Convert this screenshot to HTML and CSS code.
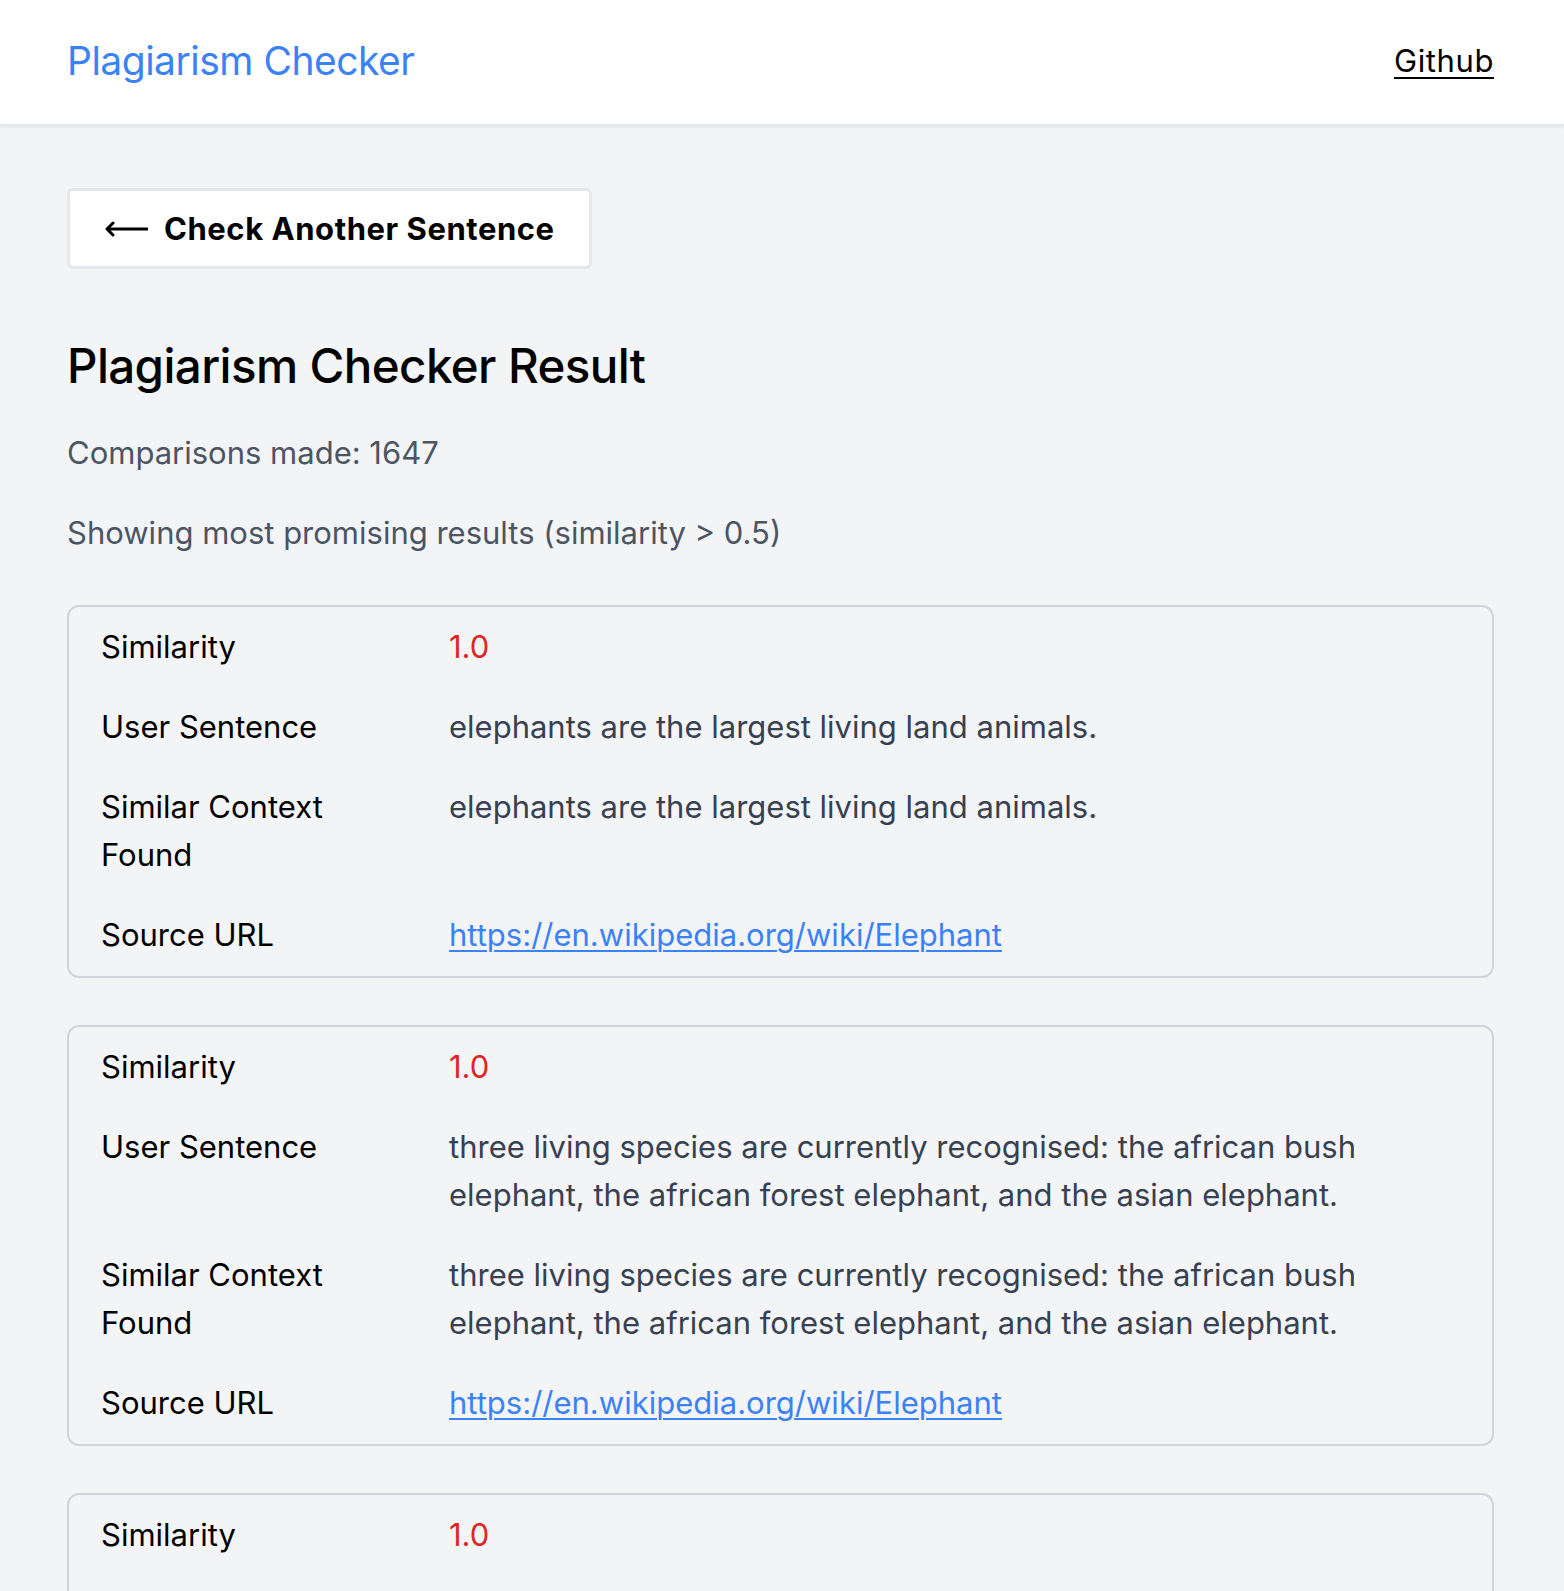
FILE: index.html
```html
<!DOCTYPE html>
<html lang="en">
<head>
<meta charset="utf-8">
<title>Plagiarism Checker</title>
<link rel="stylesheet" href="styles.css">
</head>
<body>
<header class="topbar">
  <a class="brand" href="#">Plagiarism Checker</a>
  <a class="gh" href="#">Github</a>
</header>
<main class="page">
  <a class="back" href="#"><svg class="arrow" width="44" height="18" viewBox="0 0 44 18" aria-hidden="true"><path d="M43 9H3M9 3L3 9L9 15" fill="none" stroke="#000" stroke-width="3" stroke-linecap="round" stroke-linejoin="round"/></svg><span>Check Another Sentence</span></a>
  <h1 class="title">Plagiarism Checker Result</h1>
  <p class="meta">Comparisons made: 1647</p>
  <p class="meta">Showing most promising results (similarity &gt; 0.5)</p>

  <section class="card">
    <div class="label">Similarity</div><div class="score">1.0</div>
    <div class="label">User Sentence</div><div class="value">elephants are the largest living land animals.</div>
    <div class="label">Similar Context Found</div><div class="value">elephants are the largest living land animals.</div>
    <div class="label">Source URL</div><div class="value"><a class="link" href="#">https://en.wikipedia.org/wiki/Elephant</a></div>
  </section>

  <section class="card">
    <div class="label">Similarity</div><div class="score">1.0</div>
    <div class="label">User Sentence</div><div class="value">three living species are currently recognised: the african bush elephant, the african forest elephant, and the asian elephant.</div>
    <div class="label">Similar Context Found</div><div class="value">three living species are currently recognised: the african bush elephant, the african forest elephant, and the asian elephant.</div>
    <div class="label">Source URL</div><div class="value"><a class="link" href="#">https://en.wikipedia.org/wiki/Elephant</a></div>
  </section>

  <section class="card">
    <div class="label">Similarity</div><div class="score">1.0</div>
    <div class="label">User Sentence</div><div class="value">elephants are the largest living land animals.</div>
    <div class="label">Similar Context Found</div><div class="value">elephants are the largest living land animals.</div>
    <div class="label">Source URL</div><div class="value"><a class="link" href="#">https://en.wikipedia.org/wiki/Elephant</a></div>
  </section>
</main>
</body>
</html>
```
FILE: styles.css
```css
* { box-sizing: border-box; }
html, body { margin: 0; padding: 0; }
body {
  background: #f3f4f6;
  font-family: Inter, "Noto Sans", sans-serif;
  color: #000;
}
.topbar {
  background: #fff;
  height: 126px;
  padding: 0 70px 4px 67px;
  display: flex;
  align-items: center;
  justify-content: space-between;
  border-bottom: 2px solid #e5e7eb;
  box-shadow: 0 1px 3px rgba(0,0,0,0.08);
}
.brand {
  color: #3b82f6;
  text-decoration: none;
  font-size: 39px;
  font-weight: 400;
  letter-spacing: -0.5px;
}
.gh {
  color: #000;
  font-size: 31px;
  letter-spacing: 0.6px;
  text-decoration: underline;
  text-underline-offset: 5px;
  text-decoration-thickness: 2px;
}
.page {
  padding: 62px 70px 0 67px;
}
.back {
  display: inline-flex;
  align-items: center;
  gap: 16px;
  height: 81px;
  padding: 0 34px;
  white-space: nowrap;
  background: #fff;
  border: 3px solid #e5e7eb;
  border-radius: 6px;
  color: #000;
  text-decoration: none;
  font-weight: 700;
  font-size: 31px;
  letter-spacing: 0.55px;
}
.arrow { flex: none; }
.title {
  margin: 67px 0 0 0;
  font-size: 47.5px;
  line-height: 60px;
  font-weight: 500;
  letter-spacing: -0.6px;
}
.meta {
  margin: 33px 0 0 0;
  font-size: 31px;
  line-height: 48px;
  color: #4b5563;
}
.meta + .meta { margin-top: 32px; }
.card {
  margin-top: 48px;
  border: 2px solid #d1d5db;
  border-radius: 12px;
  padding: 16px 32px 17px;
  display: grid;
  grid-template-columns: 348px 1fr;
  row-gap: 32px;
  font-size: 31px;
  line-height: 48px;
}
.card + .card { margin-top: 47px; }
.label { color: #000; padding-right: 80px; }
.value { color: #374151; }
.score { color: #dc2626; }
.link { color: #3b82f6; text-decoration: underline; text-underline-offset: 4px; text-decoration-thickness: 2px; }
```
